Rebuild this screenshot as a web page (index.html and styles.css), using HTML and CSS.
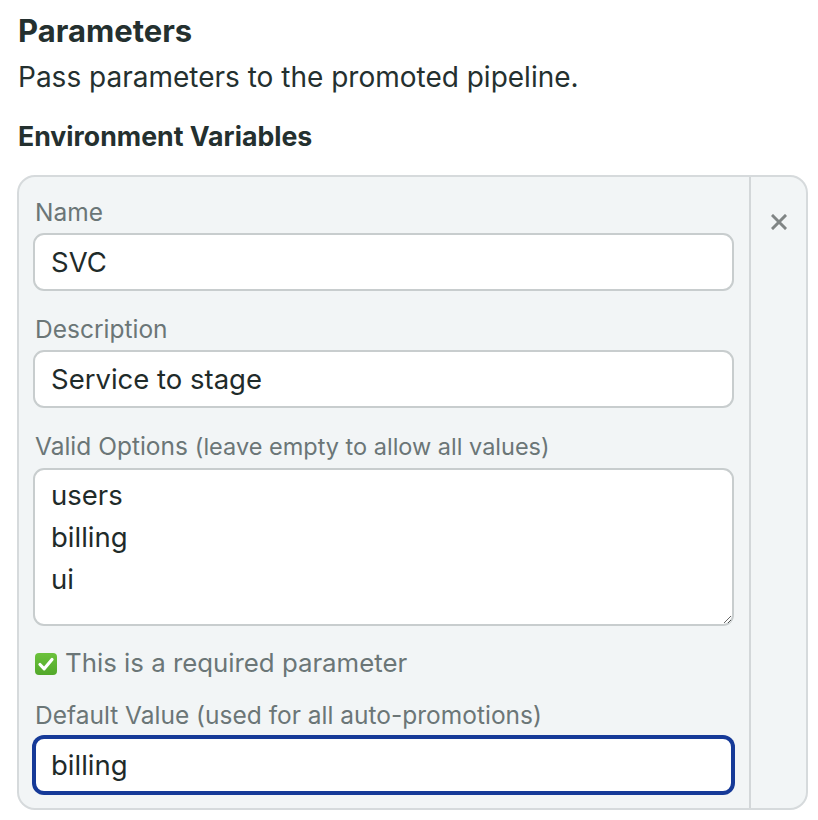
FILE: index.html
```html
<!DOCTYPE html>
<html lang="en">
<head>
<meta charset="utf-8">
<title>Parameters</title>
<link rel="stylesheet" href="styles.css">
</head>
<body>
<div class="page">
  <h1 class="title">Parameters</h1>
  <p class="lead">Pass parameters to the promoted pipeline.</p>
  <h2 class="subtitle">Environment Variables</h2>
  <div class="card">
    <div class="card-body">
      <div class="field">
        <label class="label">Name</label>
        <input class="input" type="text" value="SVC">
      </div>
      <div class="field">
        <label class="label">Description</label>
        <input class="input" type="text" value="Service to stage">
      </div>
      <div class="field field-tight">
        <label class="label">Valid Options <span class="hint">(leave empty to allow all values)</span></label>
        <textarea class="textarea">users
billing
ui</textarea>
      </div>
      <div class="check-row">
        <svg class="checkbox" width="22" height="22" viewBox="0 0 22 22" aria-hidden="true">
          <defs>
            <linearGradient id="cbg" x1="0" y1="0" x2="0" y2="1">
              <stop offset="0" stop-color="#6cc23c"/>
              <stop offset="1" stop-color="#52a82a"/>
            </linearGradient>
          </defs>
          <rect x="0" y="0" width="22" height="22" rx="4" fill="url(#cbg)"/>
          <path d="M5 11.5 L9.2 15.8 L17 6.5" fill="none" stroke="#ffffff" stroke-width="3.2" stroke-linecap="round" stroke-linejoin="round"/>
        </svg>
        <span class="check-text">This is a required parameter</span>
      </div>
      <div class="field field-last">
        <label class="label">Default Value (used for all auto-promotions)</label>
        <input class="input input-focus" type="text" value="billing">
      </div>
    </div>
    <div class="card-side">
      <svg class="close" width="16" height="16" viewBox="0 0 16 16" aria-hidden="true">
        <path d="M2 2 L14 14 M14 2 L2 14" stroke="#808585" stroke-width="3" stroke-linecap="square"/>
      </svg>
    </div>
  </div>
</div>
</body>
</html>
```

FILE: styles.css
```css
* { box-sizing: border-box; }

html, body {
  margin: 0;
  padding: 0;
  background: #ffffff;
}

body {
  font-family: Inter, "Open Sans", "Liberation Sans", sans-serif;
  color: #24302f;
}

.page {
  padding: 11px 10px 0 17px;
}

.title {
  margin: 0 0 8px 1px;
  font-size: 31px;
  line-height: 40px;
  font-weight: 700;
  color: #24302f;
}

.lead {
  margin: 0 0 24px 1px;
  font-size: 28px;
  line-height: 36px;
  color: #24302f;
}

.subtitle {
  margin: 0 0 22px 1px;
  font-size: 26.7px;
  line-height: 34px;
  font-weight: 700;
  color: #24302f;
}

.card {
  display: flex;
  border: 2px solid #d6dadc;
  border-radius: 18px;
  background: #f2f5f6;
}

.card-body {
  flex: 1;
  padding: 21px 15px 14px 14px;
  border-right: 2px solid #d3d7d9;
}

.card-side {
  width: 55px;
  display: flex;
  justify-content: center;
  align-items: flex-start;
  padding-top: 37px;
  padding-left: 1px;
}

.field {
  display: flex;
  flex-direction: column;
  margin-bottom: 24px;
}

.field-tight {
  margin-bottom: 22px;
}

.field-last {
  margin-bottom: 0;
}

.label {
  font-size: 24.5px;
  line-height: 28px;
  margin: 0 0 7px 2px;
  color: #6b7677;
}

.hint {
  font-size: 23.5px;
}

.input {
  height: 58px;
  width: 100%;
  padding: 0 16px;
  border: 2px solid #c8cdce;
  border-radius: 11px;
  background: #ffffff;
  font-family: Inter, "Open Sans", "Liberation Sans", sans-serif;
  font-size: 27.5px;
  color: #1f2b2a;
  outline: none;
}

.input-focus {
  border: 3px solid #163a98;
  box-shadow: 0 0 0 1px #163a98;
  padding-left: 15px;
}

.textarea {
  display: block;
  width: 100%;
  height: 158px;
  padding: 4px 16px;
  border: 2px solid #c8cdce;
  border-radius: 11px;
  background: #ffffff;
  font-family: Inter, "Open Sans", "Liberation Sans", sans-serif;
  font-size: 27.5px;
  line-height: 42px;
  color: #1f2b2a;
  outline: none;
  resize: vertical;
}

.check-row {
  display: flex;
  align-items: center;
  gap: 8px;
  height: 30px;
  margin: 0 0 23px 2px;
}

.checkbox {
  flex: none;
  margin-top: 2px;
}

.check-text {
  font-size: 25.8px;
  line-height: 30px;
  color: #6b7677;
}

.close {
  display: block;
}
```
